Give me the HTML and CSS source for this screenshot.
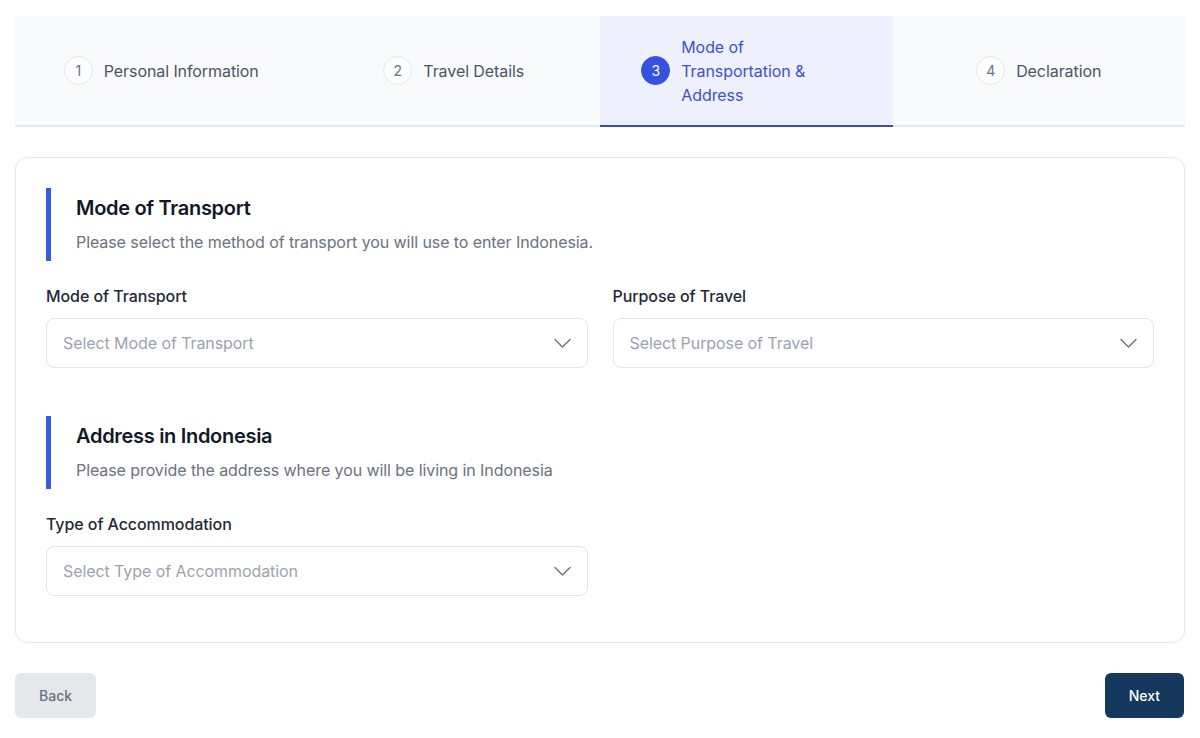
FILE: index.html
```html
<!DOCTYPE html>
<html lang="en">
<head>
    <meta charset="UTF-8">
    <meta name="viewport" content="width=device-width, initial-scale=1.0">
    <title>Arrival Card</title>
    <link rel="stylesheet" href="styles.css">
</head>
<body>
    <div class="page">
        <div class="stepper">
            <div class="step">
                <span class="step-num">1</span>
                <span class="step-label">Personal Information</span>
            </div>
            <div class="step">
                <span class="step-num">2</span>
                <span class="step-label">Travel Details</span>
            </div>
            <div class="step active">
                <span class="step-num">3</span>
                <span class="step-label">Mode of Transportation &amp; Address</span>
            </div>
            <div class="step">
                <span class="step-num">4</span>
                <span class="step-label">Declaration</span>
            </div>
        </div>

        <div class="form-card">
            <div class="section-head">
                <h2>Mode of Transport</h2>
                <p>Please select the method of transport you will use to enter Indonesia.</p>
            </div>
            <div class="form-grid">
                <div class="field">
                    <label>Mode of Transport</label>
                    <div class="select">
                        <span>Select Mode of Transport</span>
                        <svg width="17" height="10" viewBox="0 0 17 10"><path d="M1 1.5l7.5 7.5 7.5-7.5" fill="none" stroke="#6b7280" stroke-width="1.4" stroke-linecap="round" stroke-linejoin="round"/></svg>
                    </div>
                </div>
                <div class="field">
                    <label>Purpose of Travel</label>
                    <div class="select">
                        <span>Select Purpose of Travel</span>
                        <svg width="17" height="10" viewBox="0 0 17 10"><path d="M1 1.5l7.5 7.5 7.5-7.5" fill="none" stroke="#6b7280" stroke-width="1.4" stroke-linecap="round" stroke-linejoin="round"/></svg>
                    </div>
                </div>
            </div>

            <div class="section-head">
                <h2>Address in Indonesia</h2>
                <p>Please provide the address where you will be living in Indonesia</p>
            </div>
            <div class="form-grid last">
                <div class="field">
                    <label>Type of Accommodation</label>
                    <div class="select">
                        <span>Select Type of Accommodation</span>
                        <svg width="17" height="10" viewBox="0 0 17 10"><path d="M1 1.5l7.5 7.5 7.5-7.5" fill="none" stroke="#6b7280" stroke-width="1.4" stroke-linecap="round" stroke-linejoin="round"/></svg>
                    </div>
                </div>
            </div>
        </div>

        <div class="actions">
            <button class="btn btn-back">Back</button>
            <button class="btn btn-next">Next</button>
        </div>
    </div>
</body>
</html>
```

FILE: styles.css
```css
* {
    box-sizing: border-box;
}

body {
    margin: 0;
    font-family: Inter, "Noto Sans", sans-serif;
    letter-spacing: -0.005em;
    background-color: #fff;
    color: #111827;
}

.page {
    padding: 16px 15px;
}

/* stepper */
.stepper {
    display: grid;
    grid-template-columns: repeat(4, 1fr);
    background-color: #f8fafc;
    border-bottom: 2px solid #e2e8f0;
    height: 111px;
}

.step {
    display: flex;
    align-items: center;
    justify-content: center;
    gap: 11px;
    margin-bottom: -2px;
    border-bottom: 2px solid transparent;
}

.step-num {
    width: 29px;
    height: 29px;
    border-radius: 50%;
    border: 1px solid #e5e7eb;
    background-color: #fcfdfe;
    color: #6b7280;
    font-size: 14px;
    display: flex;
    align-items: center;
    justify-content: center;
    flex-shrink: 0;
}

.step-label {
    font-size: 16px;
    line-height: 24px;
    color: #4b5563;
    max-width: 170px;
}

.step.active {
    background-color: #eef0fd;
    border-bottom-color: #3b4f9e;
}

.step.active .step-num {
    background-color: #3451e0;
    border-color: #3451e0;
    color: #fff;
}

.step.active .step-label {
    color: #3d53c8;
}

/* form card */
.form-card {
    margin-top: 30px;
    border: 1px solid #e5e7eb;
    border-radius: 12px;
    padding: 30px 30px 46px;
}

.section-head {
    border-left: 5px solid #3b5bdb;
    padding: 7px 0 8px 25px;
}

.section-head h2 {
    margin: 0;
    font-size: 20px;
    line-height: 26px;
    font-weight: 600;
    letter-spacing: -0.015em;
    color: #111827;
}

.section-head p {
    margin: 10px 0 0;
    font-size: 16px;
    line-height: 22px;
    color: #6b7280;
}

.form-grid {
    display: grid;
    grid-template-columns: 1fr 1fr;
    gap: 25px;
    margin-top: 23px;
    margin-bottom: 48px;
}

.form-grid.last {
    margin-bottom: 0;
}

.field label {
    display: block;
    font-size: 16px;
    line-height: 24px;
    font-weight: 500;
    color: #1f2937;
    margin-bottom: 10px;
}

.select {
    height: 50px;
    border: 1px solid #e2e5ea;
    border-radius: 8px;
    padding: 0 16px;
    display: flex;
    align-items: center;
    justify-content: space-between;
    font-size: 16px;
    color: #9ca3af;
}

/* buttons */
.actions {
    display: flex;
    justify-content: space-between;
    align-items: flex-start;
    margin-top: 30px;
}

.btn {
    height: 45px;
    border: none;
    border-radius: 6px;
    font-family: Inter, "Noto Sans", sans-serif;
    font-size: 14px;
    font-weight: 500;
    padding: 0 24px;
    cursor: pointer;
}

.btn-back {
    background-color: #e5e7eb;
    color: #6b7280;
}

.btn-next {
    background-color: #15385d;
    color: #fff;
    margin-right: 1px;
}
```
